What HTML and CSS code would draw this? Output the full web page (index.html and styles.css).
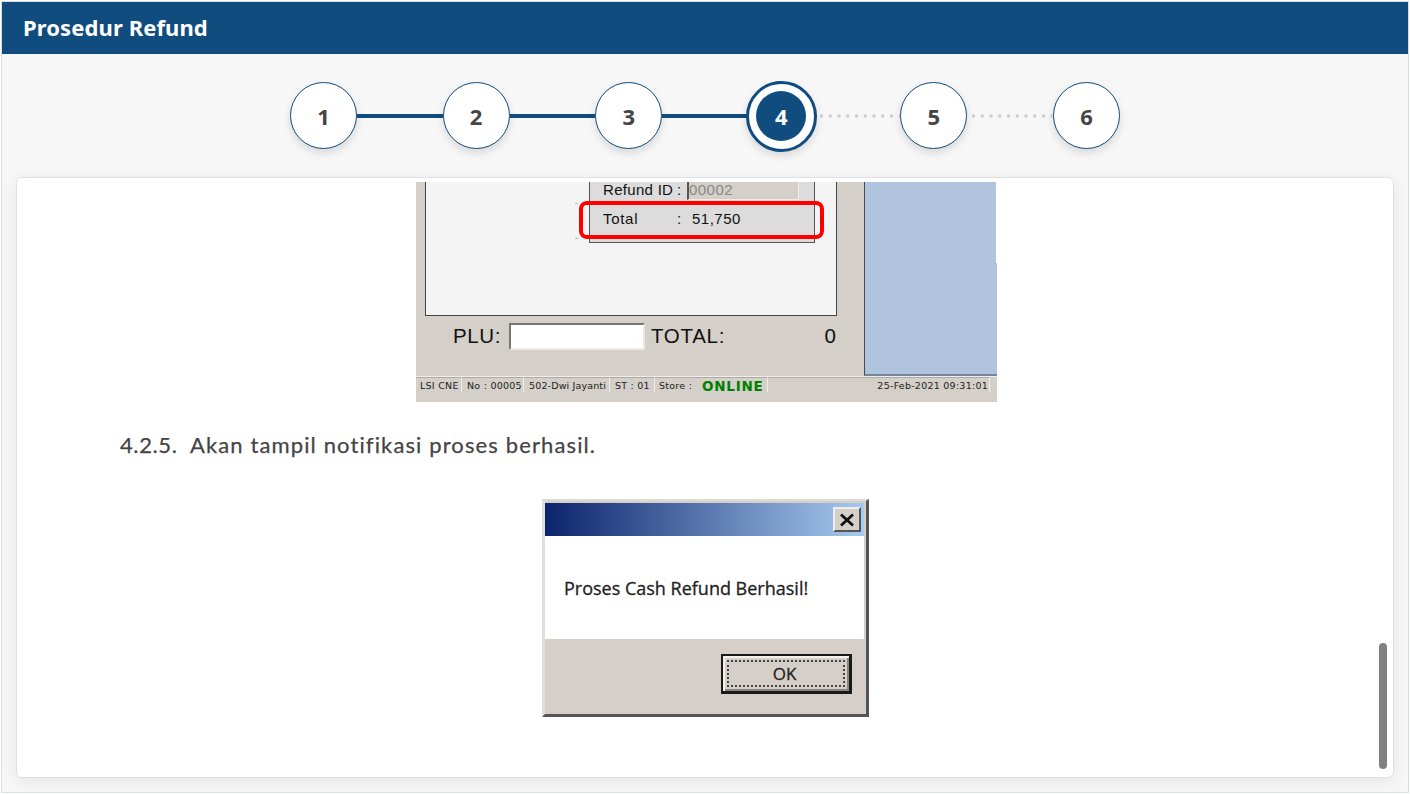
FILE: index.html
```html
<!DOCTYPE html>
<html lang="id">
<head>
<meta charset="utf-8">
<title>Prosedur Refund</title>
<link rel="stylesheet" href="styles.css">
</head>
<body>
<main class="frame">
  <header class="header">Prosedur Refund</header>
  <nav class="steps">
    <span class="step">1</span>
    <span class="line"></span>
    <span class="step">2</span>
    <span class="line"></span>
    <span class="step">3</span>
    <span class="line"></span>
    <span class="step active"><span class="dot">4</span></span>
    <svg class="dots" viewBox="0 0 86 4"><path d="M5 2H86" /></svg>
    <span class="step">5</span>
    <svg class="dots" viewBox="0 0 86 4"><path d="M5 2H86" /></svg>
    <span class="step">6</span>
  </nav>
  <section class="card">
    <div class="pos">
      <div class="pos-top">
        <div class="pos-left">
          <div class="list">
            <div class="refund">
              <div class="row row-id"><span class="lbl">Refund ID</span><span class="colon">:</span><span class="idbox">00002</span></div>
              <div class="row row-total"><span class="lbl">Total</span><span class="colon">:</span><span class="sum">51,750</span></div>
              <div class="mark"></div>
            </div>
          </div>
          <div class="entry">
            <span class="plu">PLU:</span><span class="field"></span><span class="total">TOTAL:</span><span class="zero">0</span>
          </div>
        </div>
        <div class="pos-side"></div>
      </div>
      <div class="status">
        <span class="cell c1">LSI CNE</span><span class="cell c2">No : 00005</span><span class="cell c3">502-Dwi Jayanti</span><span class="cell c4">ST : 01</span><span class="cell c5">Store : <b class="online">ONLINE</b></span><span class="cell c6">25-Feb-2021 09:31:01</span>
      </div>
    </div>
    <p class="note"><span class="num">4.2.5.</span><span class="desc">Akan tampil notifikasi proses berhasil.</span></p>
    <div class="dialog">
      <div class="titlebar"><span class="close"><svg viewBox="0 0 16 14"><path d="M2 1.5L14 12.5M14 1.5L2 12.5"/></svg></span></div>
      <div class="message"><span class="msg">Proses Cash Refund Berhasil!</span></div>
      <div class="actions"><div class="ok"><div class="focus">OK</div></div></div>
    </div>
    <div class="scroll"></div>
  </section>
</main>
</body>
</html>
```
FILE: styles.css
```css
* { box-sizing: border-box; }
body { margin: 0; background: #fff; font-family: "Open Sans", "Noto Sans", sans-serif; }
.frame { width: 1408px; height: 792px; margin-left: 1px; padding: 0; border: 1px solid #dcdfe1; background: #f7f7f7; overflow: hidden; margin-top: 1px; }
.header { height: 52px; padding-left: 21px; background: #104c7e; color: #fff; font: 700 22px/50px "Noto Sans", sans-serif; white-space: nowrap; letter-spacing: .1px; }

.steps { height: 123px; display: flex; align-items: center; justify-content: center; }
.step { width: 67px; height: 67px; flex: none; border: 1.5px solid #104c7e; border-radius: 50%; background: #fff; color: #444; display: flex; align-items: center; justify-content: center; font: 700 22px/1 "Noto Sans", sans-serif; box-shadow: 0 4px 9px rgba(0,0,0,.13); padding-top: 1px; }
.active { width: 71px; height: 71px; border-width: 3px; margin: 1px -2px 0; padding: 0; }
.dot { width: 50px; height: 50px; border-radius: 50%; background: #104c7e; color: #fff; display: flex; align-items: center; justify-content: center; }
.line { width: 85.6px; height: 4px; background: #104c7e; }
.dots { width: 85.6px; height: 4px; }
.dots path { stroke: #ccc; stroke-width: 3; stroke-dasharray: 3 5.8; fill: none; }

.card { position: relative; width: 1378px; height: 601px; margin-left: 14px; padding-top: 4px; border: 1px solid #dfe0e1; border-radius: 6px; background: #fff; box-shadow: 0 4px 18px rgba(0,0,0,.07); display: flex; flex-direction: column; }
.scroll { position: absolute; right: 6px; bottom: 8px; width: 8px; height: 126px; border-radius: 4px; background: #808080; }

.pos { width: 581px; height: 220px; margin-left: 399px; background: #d4cfc8; font-family: "Liberation Sans", Arial, sans-serif; color: #111; overflow: hidden; }
.pos-top { height: 194px; display: flex; }
.pos-left { width: 448px; padding-left: 9px; flex: none; }
.pos-side { position: relative; flex: 1; border-left: 1px solid #444b55; border-bottom: 2px solid #73849c; background: #b0c4de; }
.pos-side::after { content: ""; position: absolute; right: 0; top: 0; width: 1px; height: 81px; background: #fff; }
.list { width: 412px; height: 134px; border: 1px solid #444; border-top: 0; background: #f4f4f4; padding-left: 163px; }
.refund { position: relative; width: 226px; height: 61px; border: 1px solid #555; border-top: 0; background: #dcdcdc; font-size: 15px; }
.refund::before { content: ""; position: absolute; left: -15px; top: 21px; width: 3px; height: 34px; border: 1px solid #bbb; border-width: 1px 0; }
.row { display: flex; align-items: center; padding-left: 13px; white-space: nowrap; }
.row-id { height: 18px; line-height: 16px; }
.row-id .lbl, .row-id .colon { margin-top: -2px; }
.row-total { height: 37px; }
.lbl { width: 74px; letter-spacing: .3px; }
.row-total .lbl { letter-spacing: .7px; }
.colon { width: 10px; }
.idbox { width: 112px; height: 18px; line-height: 16px; border-left: 2px solid #555; border-right: 1px solid #eee; border-bottom: 1px solid #eee; background: #d4cfc8; color: #888; letter-spacing: .45px; }
.sum { padding-left: 5px; letter-spacing: .5px; }
.mark { position: absolute; left: -11px; top: 19px; width: 245px; height: 38px; border: 4px solid #f00; border-radius: 8px; }
.entry { display: flex; padding-top: 7px; font-size: 20.5px; line-height: 26px; white-space: nowrap; }
.plu { width: 84px; padding-left: 28px; letter-spacing: .6px; }
.field { width: 136px; height: 27px; background: #fff; border: 2px solid #777; border-right-color: #ece9e4; border-bottom-color: #ece9e4; }
.total { width: 150px; padding-left: 6px; letter-spacing: .7px; }
.zero { width: 41px; text-align: right; }

.status { height: 26px; border-top: 1px solid #f0eee9; display: flex; font: 9.5px/16px "DejaVu Sans", sans-serif; color: #222; white-space: nowrap; }
.cell { height: 15px; border-top: 1px solid #aaa; border-right: 1px solid #f0eee9; padding-left: 4px; letter-spacing: .25px; }
.c1 { width: 46px; }
.c2 { width: 62px; padding-left: 5px; }
.c3 { width: 86px; padding-left: 5px; letter-spacing: .15px; }
.c4 { width: 45px; padding-left: 5px; }
.c5 { width: 113px; display: flex; }
.c6 { width: 222px; text-align: right; padding-right: 1px; }
.online { margin-left: 10px; color: #008000; font-size: 13.5px; line-height: 17px; letter-spacing: .75px; }

.note { margin: 0; height: 97px; padding: 27px 0 0 103px; display: flex; font: 22px/32px Lato, sans-serif; color: #444; white-space: nowrap; -webkit-text-stroke: .25px #444; }
.num { width: 70px; letter-spacing: .6px; }
.desc { letter-spacing: 1.12px; }

.dialog { width: 327px; height: 218px; margin-left: 525px; border: 2px solid #dedad5; border-right: 3px solid #555; border-bottom: 3px solid #555; border-left: 3px solid #e2dfdb; background: #d6cfc9; padding: 2px 2px 0 0; font-family: "Open Sans", sans-serif; color: #222; }
.titlebar { height: 33px; padding: 4px 3px; display: flex; justify-content: flex-end; background: linear-gradient(90deg, #0c246c, #a6caf0); }
.close { width: 28px; height: 25px; display: flex; align-items: center; justify-content: center; background: #d6d0c8; border: 2px solid #eee; border-right-color: #555; border-bottom-color: #555; }
.close svg { width: 16px; height: 14px; stroke: #111; stroke-width: 2.8; }
.message { height: 103px; padding: 38px 0 0 19px; background: #fff; font-size: 18px; line-height: 28px; white-space: nowrap; -webkit-text-stroke: .3px #222; }
.actions { height: 74px; padding: 15px 12px 0 0; display: flex; justify-content: flex-end; }
.ok { width: 131px; height: 40px; border: 2px solid #1a1a1a; border-right-width: 3px; border-bottom-width: 3px; padding: 4px; box-shadow: inset 2px 2px #f3f1ed, inset -2px -2px #8a847d; }
.focus { height: 100%; padding-right: 3px; border: 2px dotted #444; font-size: 17px; line-height: 24px; text-align: center; -webkit-text-stroke: .3px #222; }
```
